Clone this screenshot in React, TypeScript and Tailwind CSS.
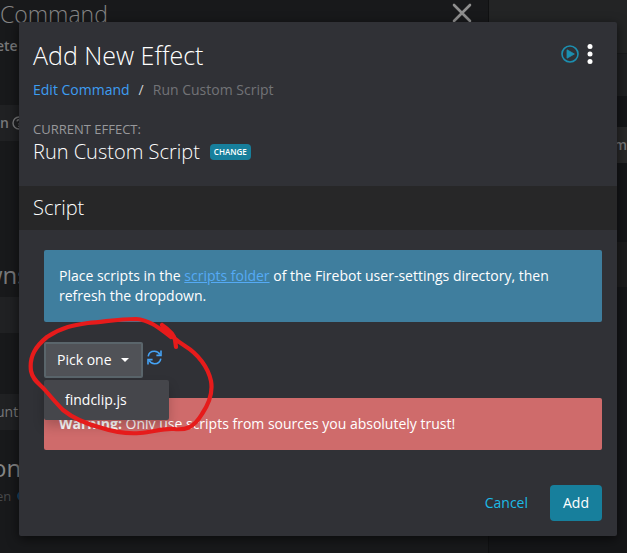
import type { ReactNode } from "react";

function PlayIcon() {
  return (
    <svg viewBox="0 0 18 18" className="size-[18px]" aria-hidden="true">
      <circle cx="9" cy="9" r="8" fill="none" stroke="#1c8fb0" strokeWidth="1.6" />
      <path d="M6 4.8 13.4 9 6 13.2Z" fill="#1c8fb0" stroke="#1c8fb0" strokeWidth="0.8" strokeLinejoin="round" />
    </svg>
  );
}

function DotsIcon() {
  return (
    <svg viewBox="0 0 6 20" className="h-5 w-1.5" fill="#fff" aria-hidden="true">
      <circle cx="3" cy="2.6" r="2.5" />
      <circle cx="3" cy="10" r="2.5" />
      <circle cx="3" cy="17.4" r="2.5" />
    </svg>
  );
}

function RefreshIcon() {
  return (
    <svg viewBox="0 0 15 15" className="size-[15px]" fill="none" stroke="#45a3f5" strokeWidth="1.6" aria-hidden="true">
      <path d="M1.2 6.4C1.7 3.2 4.3 1.3 7.4 1.3c2.5 0 4.4 1.2 5.6 3.3M13.8 8.6c-.5 3.2-3.1 5.1-6.2 5.1-2.5 0-4.4-1.2-5.6-3.3" />
      <path d="M14 .6v4.8H9.4M1 14.4V9.6h4.6" />
    </svg>
  );
}

function Backdrop() {
  return (
    <div aria-hidden="true" className="absolute inset-0 flex overflow-hidden bg-[#151618] text-[#77787a]">
      <div className="flex min-w-0 grow flex-col border-r border-[#101112] bg-[#18191b]">
        <div className="flex h-9 items-start justify-between pr-4">
          <span className="-mt-1 text-[23px] leading-9 font-light text-[#858585]">Command</span>
          <svg viewBox="0 0 20 20" className="mt-[3px] size-5" stroke="#8f8f8f" strokeWidth="2.6" strokeLinecap="round">
            <path d="M2 2 18 18M18 2 2 18" />
          </svg>
        </div>
        <div className="-ml-1 h-[69px] text-sm leading-5 font-semibold">ete</div>
        <div className="flex h-9 items-center gap-[3px] bg-[#202123] text-sm font-semibold">
          <span>n</span>
          <svg viewBox="0 0 14 14" className="size-3.5" fill="none" stroke="#77787a" strokeWidth="1.4">
            <circle cx="7" cy="7" r="6" />
            <path d="M5 5.4c.2-2.2 4-2 4 0C9 7 7 6.8 7 8.6M7 9.8v1.2" />
          </svg>
        </div>
        <div className="flex h-[156px] items-end pb-1">
          <span className="-ml-4 text-2xl leading-9">wns</span>
        </div>
        <div className="h-9 bg-[#202123]" />
        <div className="h-[61px]" />
        <div className="flex h-9 items-center bg-[#202123] text-sm font-medium">
          <span className="-ml-1">unt</span>
        </div>
        <div className="mt-5 -ml-2 text-2xl leading-9 text-[#858585]">on</div>
        <div className="-ml-1 flex items-center gap-1.5 text-[13px] leading-5 text-[#47484a]">
          <span>en</span>
          <span className="size-2.5 rounded-full bg-[#16456b]" />
        </div>
      </div>
      <div className="flex w-[138px] shrink-0 flex-col">
        <div className="h-[54px] border-b border-[#1a1b1c] bg-[#232425]" />
        <div className="h-[42px] bg-[#1f2022]" />
        <div className="mt-[31px] flex h-9 items-center justify-end bg-[#29292a] text-sm font-semibold">m</div>
        <div className="mt-[79px] h-[45px] bg-[#1c1c1d]" />
      </div>
    </div>
  );
}

function Alert({ tone, children }: { tone: string; children: ReactNode }) {
  return <div className={`rounded-xs px-[15px] py-4 text-sm leading-5 text-white ${tone}`}>{children}</div>;
}

function Scribble() {
  return (
    <svg
      viewBox="0 0 190 122"
      className="pointer-events-none absolute -top-[26px] -left-4 z-20 h-[122px] w-[190px]"
      fill="none"
      stroke="#e61b1b"
      strokeWidth="4.2"
      strokeLinecap="round"
      strokeLinejoin="round"
      aria-hidden="true"
    >
      <path d="M134 9C140 13 146 18 147 24L148 31M134 9C142 20 149 25 157 30C170 38 180 51 183 65C185 76 182 86 174 98C165 113 157 114 146 113C135 112 126 116 112 117C98 118 86 116 74 112C58 108 46 103 35 94C29 88 23 81 17 74C12 68 5 65 3 55C1 40 8 30 19 21C34 11 46 9 60 7C76 6 90 3 108 3C122 4 131 12 143 21" />
    </svg>
  );
}

export default function App() {
  return (
    <div className="relative min-h-screen overflow-hidden pt-[22px] pr-2.5 pb-[17px] pl-[19px] font-['Open_Sans',sans-serif]">
      <Backdrop />
      <div
        role="dialog"
        aria-labelledby="dialog-title"
        className="relative rounded-xs bg-[#303136] text-white shadow-[0_3px_12px_rgba(0,0,0,0.6)]"
      >
        <header className="px-3.5 pt-[15px] pb-5">
          <div className="flex items-center justify-between pr-2.5">
            <h1 id="dialog-title" className="text-[25px] leading-9 font-light">
              Add New Effect
            </h1>
            <div className="flex items-center gap-2 pb-0.5">
              <button type="button" aria-label="Run effect">
                <PlayIcon />
              </button>
              <button type="button" aria-label="More options">
                <DotsIcon />
              </button>
            </div>
          </div>
          <nav aria-label="Breadcrumb" className="mt-[7px] flex gap-[9px] text-sm leading-5">
            <a href="#command" className="text-[#3d9df2]">
              Edit Command
            </a>
            <span className="text-[#d0d0d0]">/</span>
            <span className="text-[#727376]">Run Custom Script</span>
          </nav>
          <p className="mt-5 text-[13px] leading-[18px] text-[#97989b]">CURRENT EFFECT:</p>
          <div className="flex items-center gap-2.5">
            <h2 className="text-xl leading-7 font-light">Run Custom Script</h2>
            <button type="button" className="h-4 rounded bg-[#177f9c] px-1 text-[8px] leading-4 font-semibold text-white">
              CHANGE
            </button>
          </div>
        </header>

        <h3 className="bg-[#272728] px-3.5 text-xl leading-11 font-light">Script</h3>

        <div className="pt-5 pr-[15px] pl-[25px]">
          <Alert tone="bg-[#3f7e9e]">
            Place scripts in the{" "}
            <a href="#scripts" className="text-[#55aaf5] underline">
              scripts folder
            </a>{" "}
            of the Firebot user-settings directory, then refresh the dropdown.
          </Alert>

          <div className="relative mt-5 mb-5 flex items-start gap-1">
            <button
              type="button"
              aria-haspopup="menu"
              aria-expanded="true"
              className="flex h-9 items-center gap-[9px] rounded-xs border-2 border-[#5a656b] bg-[#505257] pr-3 pl-[11px] text-sm leading-5 text-white"
            >
              Pick one
              <span className="border-x-4 border-t-4 border-x-transparent border-t-white" />
            </button>
            <button type="button" aria-label="Refresh scripts" className="mt-2">
              <RefreshIcon />
            </button>
            <ul
              role="menu"
              className="absolute top-[38px] left-0 z-10 w-[125px] rounded-xs bg-[#45464b] shadow-[0_6px_12px_rgba(0,0,0,0.2)]"
            >
              <li role="none">
                <button type="button" role="menuitem" className="h-10 w-full px-[21px] text-left text-sm leading-5 text-white">
                  findclip.js
                </button>
              </li>
            </ul>
            <Scribble />
          </div>

          <Alert tone="bg-[#cf6b6b]">
            <strong className="font-bold">Warning:</strong> Only use scripts from sources you absolutely trust!
          </Alert>
        </div>

        <footer className="flex justify-end gap-2 px-[15px] pt-[35px] pb-[15px] text-sm leading-5">
          <button type="button" className="h-9 px-3.5 text-[#1cbbe6]">
            Cancel
          </button>
          <button type="button" className="h-9 rounded bg-[#177f9c] px-[13px] font-medium text-white">
            Add
          </button>
        </footer>
      </div>
    </div>
  );
}
